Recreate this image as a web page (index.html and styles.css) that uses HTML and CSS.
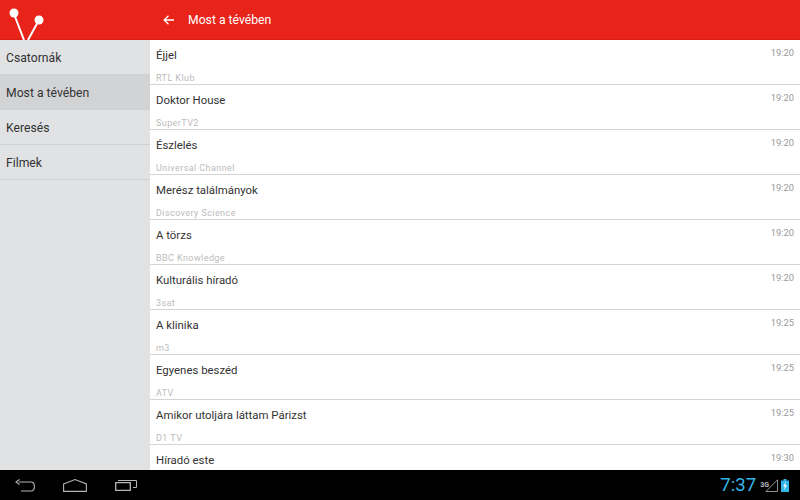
FILE: index.html
```html
<!DOCTYPE html>
<html lang="hu">
<head>
    <meta charset="UTF-8">
    <meta name="viewport" content="width=device-width, initial-scale=1.0">
    <title>Most a tévében</title>
    <link rel="stylesheet" href="styles.css">
</head>
<body>
    <header class="topbar">
        <div class="logo-cell">
            <svg width="60" height="40" viewBox="0 0 60 40">
                <path d="M14 14 L24 40 M39 20 L28 40" stroke="#fff" stroke-width="2" fill="none"/>
                <circle cx="14" cy="13" r="4.5" fill="#fff"/>
                <circle cx="39" cy="20" r="4.5" fill="#fff"/>
            </svg>
        </div>
        <div class="title-cell">
            <svg class="back" width="11" height="10" viewBox="0 0 11 10">
                <path d="M11 5 H1.5 M5.5 .8 L1.2 5 L5.5 9.2" stroke="#fff" stroke-width="1.3" fill="none"/>
            </svg>
            <h1>Most a tévében</h1>
        </div>
    </header>

    <div class="content">
        <nav class="side">
            <a href="#">Csatornák</a>
            <a href="#" class="active">Most a tévében</a>
            <a href="#">Keresés</a>
            <a href="#">Filmek</a>
        </nav>

        <main class="list">
            <div class="row"><div class="row-top"><span class="name">Éjjel</span><span class="time">19:20</span></div><div class="channel">RTL Klub</div></div>
            <div class="row"><div class="row-top"><span class="name">Doktor House</span><span class="time">19:20</span></div><div class="channel">SuperTV2</div></div>
            <div class="row"><div class="row-top"><span class="name">Észlelés</span><span class="time">19:20</span></div><div class="channel">Universal Channel</div></div>
            <div class="row"><div class="row-top"><span class="name">Merész találmányok</span><span class="time">19:20</span></div><div class="channel">Discovery Science</div></div>
            <div class="row"><div class="row-top"><span class="name">A törzs</span><span class="time">19:20</span></div><div class="channel">BBC Knowledge</div></div>
            <div class="row"><div class="row-top"><span class="name">Kulturális híradó</span><span class="time">19:20</span></div><div class="channel">3sat</div></div>
            <div class="row"><div class="row-top"><span class="name">A klinika</span><span class="time">19:25</span></div><div class="channel">m3</div></div>
            <div class="row"><div class="row-top"><span class="name">Egyenes beszéd</span><span class="time">19:25</span></div><div class="channel">ATV</div></div>
            <div class="row"><div class="row-top"><span class="name">Amikor utoljára láttam Párizst</span><span class="time">19:25</span></div><div class="channel">D1 TV</div></div>
            <div class="row"><div class="row-top"><span class="name">Híradó este</span><span class="time">19:30</span></div></div>
        </main>
    </div>

    <footer class="sysbar">
        <div class="sys-nav">
            <svg width="20" height="13" viewBox="0 0 20 13">
                <path d="M4 3 H16 Q19.4 3 19.4 7.5 Q19.4 12 16 12 H6 M4.5 .5 L1 3 L4.5 5.5" stroke="#b5b5b5" stroke-width="1.1" fill="none"/>
            </svg>
            <svg width="24" height="13" viewBox="0 0 24 13">
                <path d="M.6 5 L12 .6 L23.4 5 V12.4 H.6 Z" stroke="#b5b5b5" stroke-width="1.1" fill="none"/>
            </svg>
            <svg width="22" height="12" viewBox="0 0 22 12">
                <path d="M.7 3.7 H15.3 V11.3 H.7 Z" stroke="#b5b5b5" stroke-width="1.3" fill="none"/>
                <path d="M3 1.5 H21.5 V8.5 H18" stroke="#b5b5b5" stroke-width="1" fill="none"/>
            </svg>
        </div>
        <div class="sys-status">
            <span class="clock">7:37</span>
            <span class="net">3G</span>
            <svg class="signal" width="13" height="13" viewBox="0 0 13 13">
                <path d="M12.5 .8 V12.5 H.8 Z" stroke="#8f8f8f" stroke-width="1" fill="none"/>
            </svg>
            <svg width="8" height="13" viewBox="0 0 8 13">
                <rect x="2.5" y="0" width="3" height="2" fill="#33b5e5"/>
                <rect x="0" y="1.5" width="8" height="11.5" fill="#33b5e5"/>
                <path d="M4.8 2.6 L2 7.4 H3.8 L3.2 11.2 L6 6.2 H4.2 Z" fill="#fff"/>
            </svg>
        </div>
    </footer>
</body>
</html>
```

FILE: styles.css
```css
body {
    margin: 0;
    width: 800px;
    height: 500px;
    overflow: hidden;
    display: flex;
    flex-direction: column;
    font-family: Roboto, "Liberation Sans", sans-serif;
    background-color: #fff;
}

/* Top bar */
.topbar {
    height: 40px;
    flex: none;
    display: flex;
    box-sizing: border-box;
    border-bottom: 1px solid #d81e14;
    background-color: #e8231a;
}

.logo-cell {
    width: 150px;
    height: 40px;
    overflow: hidden;
}

.logo-cell svg {
    display: block;
}

.title-cell {
    flex: 1;
    display: flex;
    align-items: center;
    padding-left: 13px;
}

.back {
    margin-right: 14px;
}

h1 {
    margin: 0;
    font-size: 12.2px;
    font-weight: 400;
    color: #fff;
}

/* Main area */
.content {
    flex: 1;
    display: flex;
    min-height: 0;
}

.side {
    width: 150px;
    flex: none;
    background-color: #e0e2e4;
}

.side a {
    display: block;
    height: 34px;
    line-height: 36px;
    padding-left: 6px;
    border-bottom: 1px solid #cfd1d3;
    font-size: 12.2px;
    color: #333;
    text-decoration: none;
}

.side a.active {
    background-color: #d2d3d5;
}

.list {
    flex: 1;
    overflow: hidden;
}

.row {
    height: 44px;
    padding: 0 6px;
    border-bottom: 1px solid #d4d4d4;
}

.row-top {
    display: flex;
    justify-content: space-between;
    padding-top: 7px;
}

.name {
    font-size: 11.4px;
    line-height: 16px;
    color: #333;
}

.time {
    font-size: 9.4px;
    line-height: 12px;
    color: #999;
}

.channel {
    margin-top: 10px;
    font-size: 9px;
    line-height: 11px;
    color: #bbb;
    letter-spacing: 0.42px;
}

/* System bar */
.sysbar {
    height: 30px;
    flex: none;
    display: flex;
    justify-content: space-between;
    align-items: center;
    background-color: #000;
}

.sys-nav {
    display: flex;
    align-items: center;
    gap: 28px;
    padding-left: 15px;
}

.sys-status {
    display: flex;
    align-items: center;
    padding-right: 11px;
}

.clock {
    font-size: 18.6px;
    color: #33b5e5;
    margin-right: 4px;
}

.net {
    font-size: 7px;
    font-weight: 700;
    color: #bbb;
    align-self: flex-start;
    margin-top: 7px;
}

.signal {
    margin: 0 3px 0 -4px;
}
```
